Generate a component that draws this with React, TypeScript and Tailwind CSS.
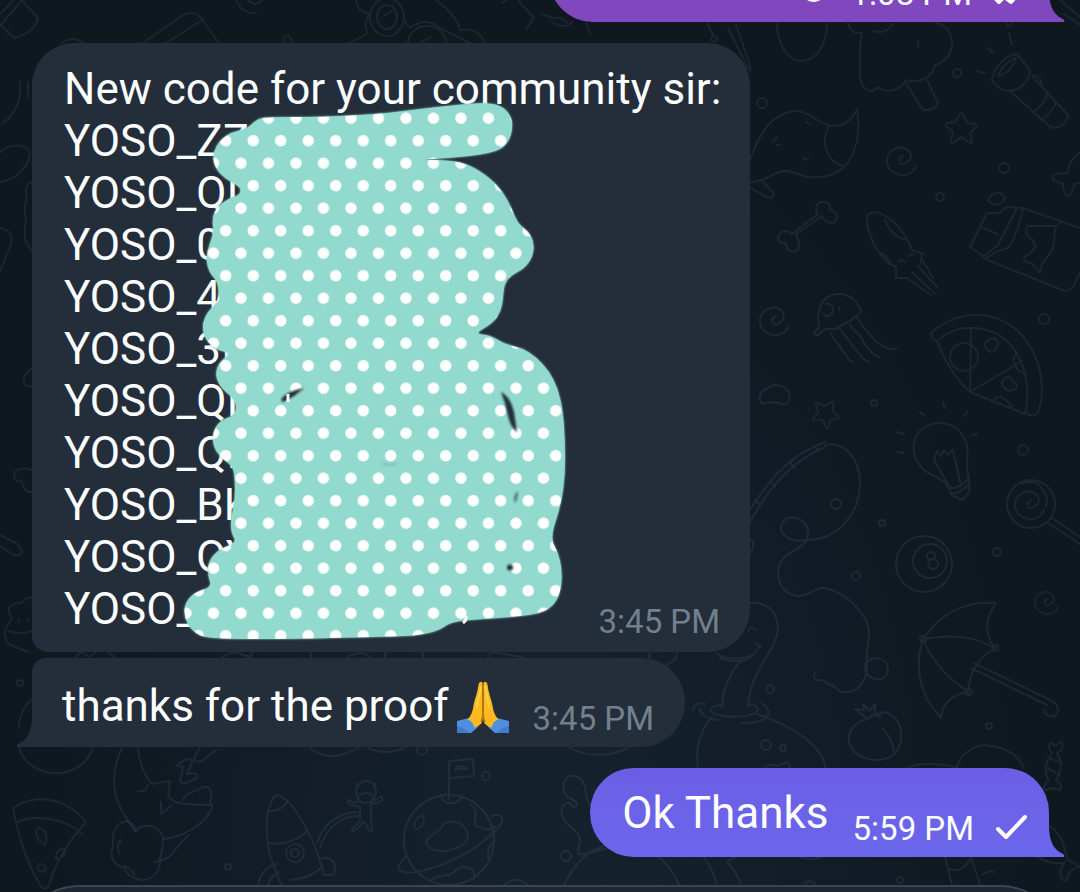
import * as React from "react";

type Point = [number, number];

const CODES = [
    "YOSO_ZZ",
    "YOSO_QI",
    "YOSO_0",
    "YOSO_4",
    "YOSO_3I",
    "YOSO_QI",
    "YOSO_QI",
    "YOSO_BK",
    "YOSO_QY",
];

// outline of the marker, clockwise from its top left
const MARKER: Point[] = [
    [257, 119], [268, 117], [320, 117], [380, 114], [420, 109], [465, 104], [485, 103], [500, 105], [510, 114], [513, 126],
    [509, 142], [497, 152], [463, 157], [413, 160], [450, 160], [470, 165], [490, 178], [503, 192], [511, 207], [518, 224],
    [528, 231], [534, 242], [533, 256], [525, 268], [510, 276], [504, 285], [503, 298], [501, 311], [493, 323], [474, 334],
    [490, 335], [504, 344], [522, 348], [536, 357], [549, 371], [558, 389], [563, 412], [565, 443], [565, 475], [561, 505],
    [550, 538], [558, 552], [562, 570], [561, 590], [555, 604], [541, 614], [500, 618], [452, 621], [440, 630], [417, 636],
    [367, 637], [293, 639], [207, 639], [192, 631], [184, 617], [185, 603], [195, 592], [212, 587], [208, 576], [208, 562],
    [219, 549], [237, 543], [231, 532], [231, 518], [235, 500], [235, 480], [233, 466], [221, 458], [213, 446], [213, 431],
    [221, 420], [236, 415], [236, 400], [222, 389], [215, 376], [219, 362], [232, 353], [216, 350], [205, 339], [202, 325],
    [208, 311], [218, 303], [219, 283], [208, 271], [206, 253], [214, 234], [212, 217], [218, 206], [230, 198], [240, 195],
    [241, 187], [224, 178], [214, 166], [213, 153], [220, 140], [232, 132], [247, 129],
];

function smooth(points: Point[]) {
    const mid = (a: Point, b: Point) => `${(a[0] + b[0]) / 2} ${(a[1] + b[1]) / 2}`;
    const last = points[points.length - 1];
    return `M${mid(last, points[0])}` + points.map((p, i) => {
        const next = points[(i + 1) % points.length];
        return `Q${p[0]} ${p[1]} ${mid(p, next)}`;
    }).join("") + "Z";
}

const BUBBLES_OF_AIR = [
    [762, 103, 5], [957, 73, 4], [1004, 168, 5], [940, 197, 4], [1044, 319, 5], [874, 403, 3], [1023, 450, 5],
    [836, 504, 5], [882, 523, 3], [856, 576, 4], [997, 552, 4], [770, 689, 4], [989, 726, 3], [566, 856, 5],
    [20, 683, 3], [228, 867, 3], [486, 776, 4], [900, 880, 3], [422, 750, 5], [1009, 23, 3],
];

const SPIRALS = [[902, 160, 1], [775, 320, 1], [1047, 602, 0.8], [1030, 504, 1]];

const STARS = [[961, 128, 1, 0], [826, 413, 0.85, 30]];

const DOODLES = [
    // paint brush and balloon
    "M707 23l6 12M728 28l20 40q4 6 2-3l-14-40M714 36a3 3 0 1 0 .1 0M777 23c0 20 10 38 25 38s25-18 25-38",
    // broccoli
    "M848 23q4 13 14 9c-3 14-2 28-2 42 0 14 10 22 18 13 8 7 22 4 28-7 12 4 26-2 29-15 12-3 17-14 17-22 0-10-6-18-16-20M873 31q13 4 20-7M918 42v5M906 83l16 26q10 4 16-6l-11-23",
    // flashlight
    "M988 48l5 5M977 71l7 2M1009 33l3 12M992 80c2-14 14-25 25-26l13 16c-1 12-10 21-22 21-7 0-12-5-16-11zM998 76c3-9 11-16 18-18-3 9-9 16-18 18M1010 91l40 36c8 3 18-4 18-12l-36-39M1035 111c7-5 12-12 12-20M1043 119c7-5 11-11 13-17M1033 75q9 2 9 12M1060 0l20 17M1064 14l16 11",
    // pepper
    "M750 160c10-28 22-47 45-49 16 0 24 15 40 15 11-1 18-8 22-17 3 20 1 38-8 52-8 13-25 18-41 16-12-2-17-8-26-6-10 3-18 11-32 11M829 126c-8 15-4 33 13 40M750 188l17 9c8 3 8-3 4-7l-9-9M773 141l4-4M777 145h3M803 158l5 2M806 122l4 2",
    // bone
    "M796 234l26-18c3 8 13 9 15 2 0-6-5-8-7-8 1-7-4-9-9-8-6 2-6 9-3 12l-26 20c-5-5-13-3-14 3 0 5 4 7 8 6 0 7 5 10 10 8 5-3 3-9 0-17z",
    // squid
    "M867 217c3-8 13-5 23 2 12 9 18 20 22 31l11 4-3 10M867 217c0 20 12 42 29 50v11h11M885 220c4 12 14 19 23 20M880 253q8 1 9 11M899 262q3-4 6 0M909 256q2-3 5-1M907 278l24 17M912 272l23 22M918 266l20 22M921 258l12 20",
    // bag of chips
    "M1023 208l57 20M1023 208c-2 14-8 30-15 40-10 2-16 6-23 11l80 32q7 0 10-8l5-10M987 213l-17 34 13 9M987 213h13l7-6 16 1M982 227l15 7M1017 208l-19 37-15 12M988 200c3-7 11-11 17-2-4 8-12 9-17 2M1028 226h28c-3 10 0 21-7 29-5 6-9 10-9 18l-8-10c-8 0-11-6-4-8l8-8-4-8c-8-4-7-10-4-13zM1056 226l5-4",
    // starfish
    "M1080 152c-8 6-12 12-12 21-8 0-18 0-15 7l10 4c0 10 5 15 9 9l2-9 6-1",
    // jellyfish
    "M819 328c-4-25 8-34 19-34 12 0 21 8 23 18-2 5-8 3-9 8-8 3-11 5-14 8-6 3-10-1-14 2-6 3-5 7-10 4q1-4 5-6M826 304a6 6 0 1 1-3 10M839 307v3M831 333c4 12 8 8 10 16 6 5 5 11 12 13M840 329c6 9 9 10 14 19 5 5 9 13 15 14M850 324c4 10 12 10 13 18 6 8 10 13 16 15M857 317c6 12 14 18 18 24 8 5 12 9 22 8",
    // pizza
    "M931 333c33-30 80-20 98 12 14 22 16 48 9 67-3 5-9 4-12 1M931 333q0 7 6 8M937 341c26-23 63-14 79 11 11 18 14 43 9 62l-55-22c-15-14-26-32-33-51zM971 329l-1 63 52-31M1017 353c-8 8 0 20 9 20M992 402q8-12 20 5M989 340c4-4 12 1 8 6-2 7-7 7-9 4-5-4-3-8 1-10M1007 377c4-2 6 2 6 5 6 2 4 9-1 8-4 2-7-1-8-3-4-4-1-8 3-10M950 357a14 14 0 1 0 28 0 14 14 0 1 0-28 0",
    // cloud, bulb
    "M762 404c-6-8 0-14 6-16 8-6 18-2 21 5 2 9-2 14-10 10q-9-2-17 1",
    "M940 423c-30 0-36 36-10 51 8 4 14 6 18 13l4 8 10 5 7-8c2-13-3-22-2-30 4-24-10-39-27-39M948 487c7 3 15-2 20-8M950 493c7 1 14-3 19-9M949 486l-15-26 3-9 4 5 3-6 4 5 5-5 8 36M943 402l2 6M920 412l4 3M897 432l7 2M898 452l6 1M964 416l3-4M972 435l5-1",
    // fishing rod and line
    "M750 510c20-32 40-55 75-68M750 522c22-40 45-62 75-75M755 500l5 5M771 482l4 5M790 463l5 5M815 447l3 4M825 445c20-5 35 15 35 38 0 30-22 57-53 57-18 4-28-8-26-14 4-14 26-10 27 6 2 20-30 16-30 41 0 16 12 23 22 23 10-1 15-9 25-8 24 5 44 30 44 44 0 12-4 22-2 37-2 15-12 25-24 23-8-1-6-7-13-7-5-3-5-5-10-5-8 2-7-6-4-7M865 665c2-8 22-12 23 5-1 14-22 12-23-3",
    // billiard ball
    "M896 564a28 28 0 1 0 56 0 28 28 0 1 0-56 0M913 561a17 17 0 1 0 34 0 17 17 0 1 0-34 0M927 556a4 4 0 1 0 8 0 4 4 0 1 0-8 0M928 564a5 5 0 1 0 10 0 5 5 0 1 0-10 0",
    // lollipop
    "M1007 504a24 24 0 1 0 48 0 24 24 0 1 0-48 0M1052 518l28 19M1048 523l32 21M1022 484c16-8 28 10 24 22",
    // umbrella
    "M923 639c16-24 40-38 73-36-10 14-12 30-2 45-20-12-42-14-71-9zM923 639c8 22 28 42 46 53-1-15 8-34 26-44M923 639c-8 24-6 54 18 79 1-14 11-24 28-26M974 663l76 37c10 4 10 14 3 16-6 1-10-3-8-6M971 668l76 37M992 648a3 3 0 1 0 6 0 3 3 0 1 0-6 0M966 692a3 3 0 1 0 6 0 3 3 0 1 0-6 0M920 639a3 3 0 1 0 6 0 3 3 0 1 0-6 0",
    // sea serpent
    "M750 603c18-2 28 10 28 26-2 24-28 40-30 78M741 660c-10 12-18 28-19 47M716 653c10 8 38 8 43-6M720 658c10 5 26 4 32-2M755 643l6 4M748 631q3-6 8-1M748 536q8 6 4 14-2 4-6 4M722 705c-12 0-16 8-3 10 12 3 34 2 38-4 3-4-4-8-9-6M693 710c1-6 8-8 12-6M700 708c0 6 8 12 20 12M762 703c12 10 8 20-20 20M712 717c-12 14-17 32-14 51M757 714c36 12 68 34 68 54M761 745a5 5 0 1 0 10 0 5 5 0 1 0-10 0M780 748a3 3 0 1 0 6 0 3 3 0 1 0-6 0M765 767q7-4 12-1l10-4q4 3 2 7",
    // strawberry
    "M868 719c-18 3-24 20-15 31 8 10 28 14 40 5 14-12 10-40-9-43l-14 5M882 728c8 8 12 16 12 27M868 719l-13-10 9 1-1-6 7 7 5-7v9q6 1 5 4l-8-2z",
    // planets and candy on the right
    "M957 768c2-14 20-26 34-22 16 2 28 10 33 22M908 767q20-6 48 0M1050 743c-2 5 0 8 2 10-9 12-7 22-3 27-6 4-6 10-3 10l7-2 7 2c3-4-1-8-4-10 6-10 6-20 1-27 4-2 8-8 4-11-4 0-3 4-6 4-2-2-3-4-5-3M1049 758l13 5M1047 768l13 7",
    "M1050 826c10 8 14 16 17 33 4 4 10 4 13 8-4 0-9 3-11 7-1 6-3 8-6 6-5-6-2-14 2-18M1038 857c8 6 16 7 26 6M945 857l7 28M971 857l10 30M950 869c8 4 16-2 20-10M982 875q6-5 12-3M800 857q12 4 22 0M805 884q4-6 10 0",
    // seaweed
    "M577 777c-12-6-18 10-10 20 12 4 12 10 6 10-5-10-14 0-11 8 4 14 20 14 18 28-5 14 0 12 8 10l24-6M577 777c12 4 6 24 14 28l8 6M564 885c14-30 34-42 58-41 22-1 46 14 57 41M704 857c8 12 12 20 12 28M727 862l8-5M727 862c8 8 12 16 14 24M570 748c16 9 40 9 58 0M650 653q-2 3 0 6M666 665q10-3 11-12",
    // melon slice
    "M13 808c20-14 52-12 73 14-20 22-30 40-36 60-2 8-7 8-10 3-13-22-22-50-27-77zM17 822c18-8 48-4 65 12M38 828c8 0 10 10 7 17-7-4-12-12-7-17M65 849c1 6-4 10-9 10-1-6 4-12 9-10M38 865c5-3 9 2 7 6-4 2-9-1-7-6",
    // sleeping moon and its cloud
    "M19 747a38 34 0 0 0 74 0M19 728a38 38 0 0 1 12-28M122 748c-14 30-10 54 14 84M138 748c2 18 8 30 14 36l18-3-2 16 8 5c8 3 24 3 36 3 2 6-16 30-48 34M161 802v12l10-8M138 791q8 2 10-6M183 800c4-10 10-6 20-13 8-2 10 8 7 16M177 766c4-6 12-8 16-6l-6 14c8-2 12 0 10 4-8 4-14 8-17 3l3-14zM200 748c-8 10-6 16 2 13l14-11",
    "M136 832c4-10 24-8 27 6-1 12 0 12-3 20 1 12-6 22-18 22-10-2-16-6-17-12-12-2-16-12-12-22-2-14 4-24 14-25 6 2 9 8 9 11M121 840q-6 6-1 14M124 866q6 1 10 8M155 862q8-2 14-5c8-8 8-12 20-22",
    // rocket
    "M276 795c6 0 14 8 20 16 16 24 24 48 28 64M276 795c-10 10-12 34-6 60l12 32M270 811c8 0 14-4 17-9M270 843c14 3 30-4 38-13M286 853a9 9 0 1 0 18 0 9 9 0 1 0-18 0M291 853a4 4 0 1 0 8 0 4 4 0 1 0-8 0M278 864c-12 2-18 10-20 22M279 872c-7 3-10 8-11 14M322 858c14-2 16 14 10 17h-9M290 880q22-2 33-14M317 843c6-18 20-30 40-31M320 848c6-18 18-32 38-32",
    // astronaut
    "M356 792a9 10 0 1 1 20 0 9 10 0 1 1-20 0M357 787l-1-4M374 786l2-3M359 796q7-6 14 0M358 802c-8 3-8-4-10-2-2 4 6 7 12 6v14c-4 8-10 8-8 11 6 0 8-6 11-9 4 0 4 8 8 9 3-4-1-10 0-14v-14c6 1 13-2 11-6-3-2-4 6-10 2",
    // globe with a flag
    "M404 840a45 45 0 1 0 90 0 45 45 0 1 0-90 0M449 799v-38l24-2 1 17-24 2M455 769q6-6 12 0zM441 795c2 12 20 10 21 0M426 842c4-10 14-8 18-19 14-5 22 3 24 12-1 12-12 12-20 16-14 1-20-2-22-9M471 805c10 8 0 16 6 22 8-1 6 6 18 0M414 826c2-10 10-14 10-6-2 8-8 12-10 6M491 816c12-4 16 4 4 15-20 20-50 36-80 41-18 2-22-4-8-16M431 880c8-6 12-2 22-7 10-12 26-4 20 6M494 841c-6 4-8 16-4 20M504 885q12-10 24 0",
    // what peeks out above and between the bubbles
    "M0 14l14-14M0 26l22-26M14 38c12-2 22-10 24-20l-18-20M14 38L0 24M62 43q10-8 22 0M143 43l40-28c8-4 16-2 20 6l16 22M166 43l38-24M236 0c4 10 12 14 20 13M248 0q8 8 14 0M283 43q3-16 10 0M350 43l18-10c-6-8 0-16 2-20q-12 0-14-13M370 17a17 19 0 1 0 34 0 17 19 0 1 0-34 0M377 17a10 12 0 1 0 20 0 10 12 0 1 0-20 0M384 16l8-5M404 20l6 8q16-12 30 0l30 15M436 0c12 8 22 20 24 30 10-2 22 2 24 13M408 43a18 16 0 1 1 38 0M421 42l10-5M502 3l6-4M518 0l16 18-8 12M542 14l10 4q10-2 16 6M552 22q12 8 20 0M586 22l4 11",
    "M2 124c14-10 20-26 18-42M28 98V82M0 152c12-10 28-8 30 2-2 14-14 26-30 28M32 182c-8 2-6 10-5 18-4 6-2 14-1 20-2 14-3 20 6 31M0 228q14 2 11 16L0 272M32 368q-10 8-8 15 2 5 8 3M32 470c-8-3-18-1-18 5s6 7 8 6c0 6 4 12 10 11M0 535l16 8c10 8 6 14-2 12L0 546M32 597c-12 2-8 8-14 6-12 2-10 8-6 16-8 10-10 14-4 25l20 8M8 631q12 4 24 0M19 620v2M28 619v2",
    "M75 657l6-5 8 5 8-5M108 652l8 6M222 657l12-5 16 5 3-5M311 652v6M385 652v6M423 652v6M348 657q14-8 22 0M310 748q20 16 48 0M368 748q18 8 36 0M488 657l4-5 30 5",
];

function Wallpaper() {
    return <svg aria-hidden="true" className="absolute inset-0 h-full w-full" viewBox="0 0 1080 892"
                preserveAspectRatio="xMidYMin slice" fill="none" stroke="#93b4cb" strokeOpacity="0.1"
                strokeWidth="2" strokeLinecap="round" strokeLinejoin="round">
        {DOODLES.map(d => <path key={d} d={d}/>)}
        {BUBBLES_OF_AIR.map(([x, y, r]) => <circle key={`${x}-${y}`} cx={x} cy={y} r={r}/>)}
        {SPIRALS.map(([x, y, s]) =>
            <path key={`${x}-${y}`} transform={`translate(${x} ${y}) scale(${s})`}
                  d="M1-4c-6 3-4 9 1 8 6-2 9-8 5-13C-1-17-15-10-15 1-15 15 7 22 14 6"/>)}
        {STARS.map(([x, y, s, turn]) =>
            <path key={`${x}-${y}`} transform={`translate(${x} ${y}) scale(${s}) rotate(${turn})`}
                  d="M-1-14q1-2 3 0l4 9 8 1q3 1 1 3l-6 6 2 9q0 2-2 1l-9-6-8 6q-3 0-2-3l2-8-7-6q-1-3 1-3l8-1z"/>)}
    </svg>;
}

function Marker() {
    return <svg aria-hidden="true" className="absolute left-[148px] top-[57px] w-[400px]" viewBox="180 100 400 545">
        <defs>
            <pattern id="dots" x="227.2" y="118.2" width="27.5" height="45" patternUnits="userSpaceOnUse">
                <rect width="27.5" height="45" fill="#92dace"/>
                <circle cx="13.75" cy="0" r="5.7" fill="#fff"/>
                <circle cx="13.75" cy="45" r="5.7" fill="#fff"/>
                <circle cx="26" cy="22.5" r="5.7" fill="#fff"/>
                <circle cx="-1.5" cy="22.5" r="5.7" fill="#fff"/>
            </pattern>
            <filter id="soft">
                <feGaussianBlur stdDeviation="0.8"/>
            </filter>
        </defs>
        <path d={smooth(MARKER)} fill="#92dace" filter="url(#soft)"/>
        <path d={smooth(MARKER)} fill="url(#dots)"/>
        {/* spots the marker missed */}
        <g filter="url(#soft)" fill="#232e3a">
            <path d="M281 400q4-8 23-12-8 8-21 14z"/>
            <path d="M501 392q9 4 13 20l3 20q-6-4-9-16-2-12-7-24z"/>
            <path d="M514 499q0-5 4-8 0 8-3 12z" fillOpacity="0.6"/>
            <circle cx="510" cy="567.5" r="3"/>
            <path d="M382 464q8 2 15 0" fill="none" stroke="#232e3a" strokeOpacity="0.3"/>
        </g>
        <path d="M288 394v8" stroke="#fff" strokeWidth="3"/>
        <path d="M466 616q1 4-3 7" fill="none" stroke="#fff" strokeWidth="3"/>
    </svg>;
}

function FoldedHands() {
    return <svg role="img" aria-label="folded hands" className="mt-px h-[52px] w-[52px]" viewBox="0 0 52 52">
        <path d="M0 40l12-3 9 9-7 6H0z" fill="#4f8fdd"/>
        <path d="M52 40l-12-3-9 9 7 6h14z" fill="#4f8fdd"/>
        <path d="M0 45q7 1 12 7H0zM52 45q-7 1-12 7h12z" fill="#3f7ccb"/>
        <path d="M25.500 1.500q-3-2-4 2c-1 9-4 15-5 21-1 7-3 11-6 14q5 1 7 8 9-2 8-10z" fill="#fdb91f"/>
        <path d="M26.500 1.500q3-2 4 2c1 9 4 15 5 21 1 7 3 11 6 14q-5 1-7 8-9-2-8-10z" fill="#fdb91f"/>
        <path d="M24 5c-1 9-4 16-4 22M28 5c1 9 4 16 4 22" fill="none" stroke="#ffd23f" strokeWidth="2"/>
        <path d="M26 3v27q0 6-2 11M26 30q0 6 2 11" fill="none" stroke="#b87a0c" strokeWidth="1.500"/>
    </svg>;
}

function Tail({className}: { className: string }) {
    return <svg aria-hidden="true" className={`absolute bottom-0 h-[44px] w-[16px] ${className}`} viewBox="0 0 16 44">
        <path d="M0 0v44h15q1-2-1-3C5 37 0 29 0 12z" fill="currentColor"/>
    </svg>;
}

function Time({children}: { children: string }) {
    return <time className="self-end whitespace-nowrap text-[33px] leading-[39px]">{children}</time>;
}

export default function App() {
    return <main
        className="relative flex h-screen flex-col overflow-hidden bg-[#0f171f] bg-[radial-gradient(ellipse_at_50%_95%,#15222e_0%,#0f171f_70%)] font-['Roboto',sans-serif] text-[44px] leading-[52px] text-[#fbfdff]">
        <Wallpaper/>

        <div className="relative flex h-[22px] shrink-0 items-end justify-end pr-[31px]">
            <div className="relative flex w-[500px] shrink-0 justify-end rounded-bl-[44px] bg-[#8047bf] pb-[9px] pr-[21px] pt-[19px]">
                <div className="flex h-[61px] gap-6">
                    <p>g</p>
                    <Time>1:08 PM</Time>
                    <svg aria-label="read" role="img" className="-ml-1 mb-2 h-[24px] w-[36px] self-end" viewBox="0 0 36 24"
                         fill="none" stroke="#fff" strokeWidth="4" strokeLinecap="round" strokeLinejoin="round">
                        <path d="M0 14l7 7L24 3M15 18l4 3L35 3"/>
                    </svg>
                </div>
                <Tail className="left-full text-[#8047bf]"/>
            </div>
        </div>

        <div className="relative mx-8 mt-[21px] w-[718px] shrink-0 rounded-[42px] rounded-bl-[16px] bg-[#232e3a] pb-[11px] pl-8 pr-[30px] pt-5">
            <p className="whitespace-nowrap">New code for your community sir:</p>
            {CODES.map((code, i) => <p key={i}>{code}</p>)}
            <div className="flex h-[58px] justify-between text-[#72808e]">
                <p className="text-[#fbfdff]">YOSO_</p>
                <Time>3:45 PM</Time>
            </div>
            <Marker/>
        </div>

        <div className="relative mx-8 mt-[6px] w-fit shrink-0 rounded-r-[44px] rounded-tl-[14px] bg-[#232e3a] pb-[9px] pl-[30px] pr-[31px] pt-[22px]">
            <div className="flex h-[58px] text-[#72808e]">
                <p className="mr-2 text-[#fbfdff]">thanks for the proof</p>
                <FoldedHands/>
                <span className="w-6"/>
                <Time>3:45 PM</Time>
            </div>
            <Tail className="right-full -scale-x-100 text-[#232e3a]"/>
        </div>

        <div className="relative mr-[31px] mt-[21px] w-fit shrink-0 self-end rounded-l-[44px] rounded-tr-[44px] bg-linear-to-b from-[#6b5ee4] to-[#6b67ec] pb-[9px] pl-8 pr-[21px] pt-[19px]">
            <div className="flex h-[61px] gap-6">
                <p>Ok Thanks</p>
                <Time>5:59 PM</Time>
                <svg aria-label="sent" role="img" className="-ml-1 mb-2 h-[26px] w-[34px] self-end" viewBox="0 0 34 26"
                     fill="none" stroke="#fff" strokeWidth="4" strokeLinecap="round" strokeLinejoin="round">
                    <path d="M4 15l8 8L31 3"/>
                </svg>
            </div>
            <Tail className="left-full text-[#6b67ec]"/>
        </div>

        <footer className="relative mx-4 mt-[28px] h-32 shrink-0 rounded-t-[64px] border-2 border-[#3a4553] bg-[#1e2834]"/>
    </main>;
}
